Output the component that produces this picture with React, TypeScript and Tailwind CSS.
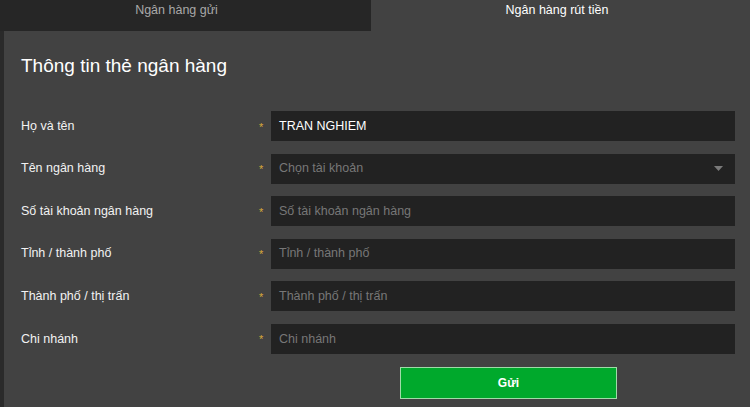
import React from "react";

const fields = [
  { label: "Họ và tên", value: "TRAN NGHIEM", placeholder: "" },
  { label: "Tên ngân hàng", value: "", placeholder: "Chọn tài khoản", select: true },
  { label: "Số tài khoản ngân hàng", value: "", placeholder: "Số tài khoản ngân hàng" },
  { label: "Tỉnh / thành phố", value: "", placeholder: "Tỉnh / thành phố" },
  { label: "Thành phố / thị trấn", value: "", placeholder: "Thành phố / thị trấn" },
  { label: "Chi nhánh", value: "", placeholder: "Chi nhánh" },
];

const App = () => {
  return (
    <div className="w-[750px] h-[407px] overflow-hidden bg-[#2a2a2a] font-['Liberation_Sans',Arial,sans-serif]">
      <div className="flex h-[31px] text-[12.5px] leading-[15px]">
        <div className="w-[371px] bg-[#262626] text-[#a9a9a9] flex justify-center pt-[3px] pr-[18px]">
          Ngân hàng gửi
        </div>
        <div className="flex-1 bg-[#424242] text-white flex justify-center pt-[3px] pr-[7px]">
          Ngân hàng rút tiền
        </div>
      </div>

      <div className="ml-[4px] h-[376px] bg-[#424242] pt-[24px]">
        <h2 className="pl-[17px] text-[19px] leading-[22px] text-white">Thông tin thẻ ngân hàng</h2>

        <div className="mt-[34px] flex flex-col gap-[12.6px]">
          {fields.map(({ label, value, placeholder, select }, index) => (
            <div key={index} className="flex items-center">
              <div className="w-[255px] pl-[17px] text-[12.5px] text-[#f2f2f2]">{label}</div>
              <div className="w-[12px] text-[#d7a93a] text-[11px] leading-none pt-[2px]">*</div>
              <div className="relative w-[464px] h-[30px] bg-[#222222] flex items-center pl-[8px] text-[12.5px]">
                {value ? (
                  <span className="text-white">{value}</span>
                ) : (
                  <span className="text-[#777777]">{placeholder}</span>
                )}
                {select && (
                  <svg
                    className="absolute right-[12px] top-[12px]"
                    width="9"
                    height="5"
                    viewBox="0 0 9 5"
                  >
                    <path d="M0 0 L9 0 L4.5 5 Z" fill="#7a7a7a" />
                  </svg>
                )}
              </div>
            </div>
          ))}
        </div>

        <button className="mt-[13px] ml-[396px] w-[217px] h-[32px] bg-[#00a92c] border border-[#9fdca8] text-white text-[12px] font-bold flex items-center justify-center">
          Gửi
        </button>
      </div>
    </div>
  );
};

export default App;
